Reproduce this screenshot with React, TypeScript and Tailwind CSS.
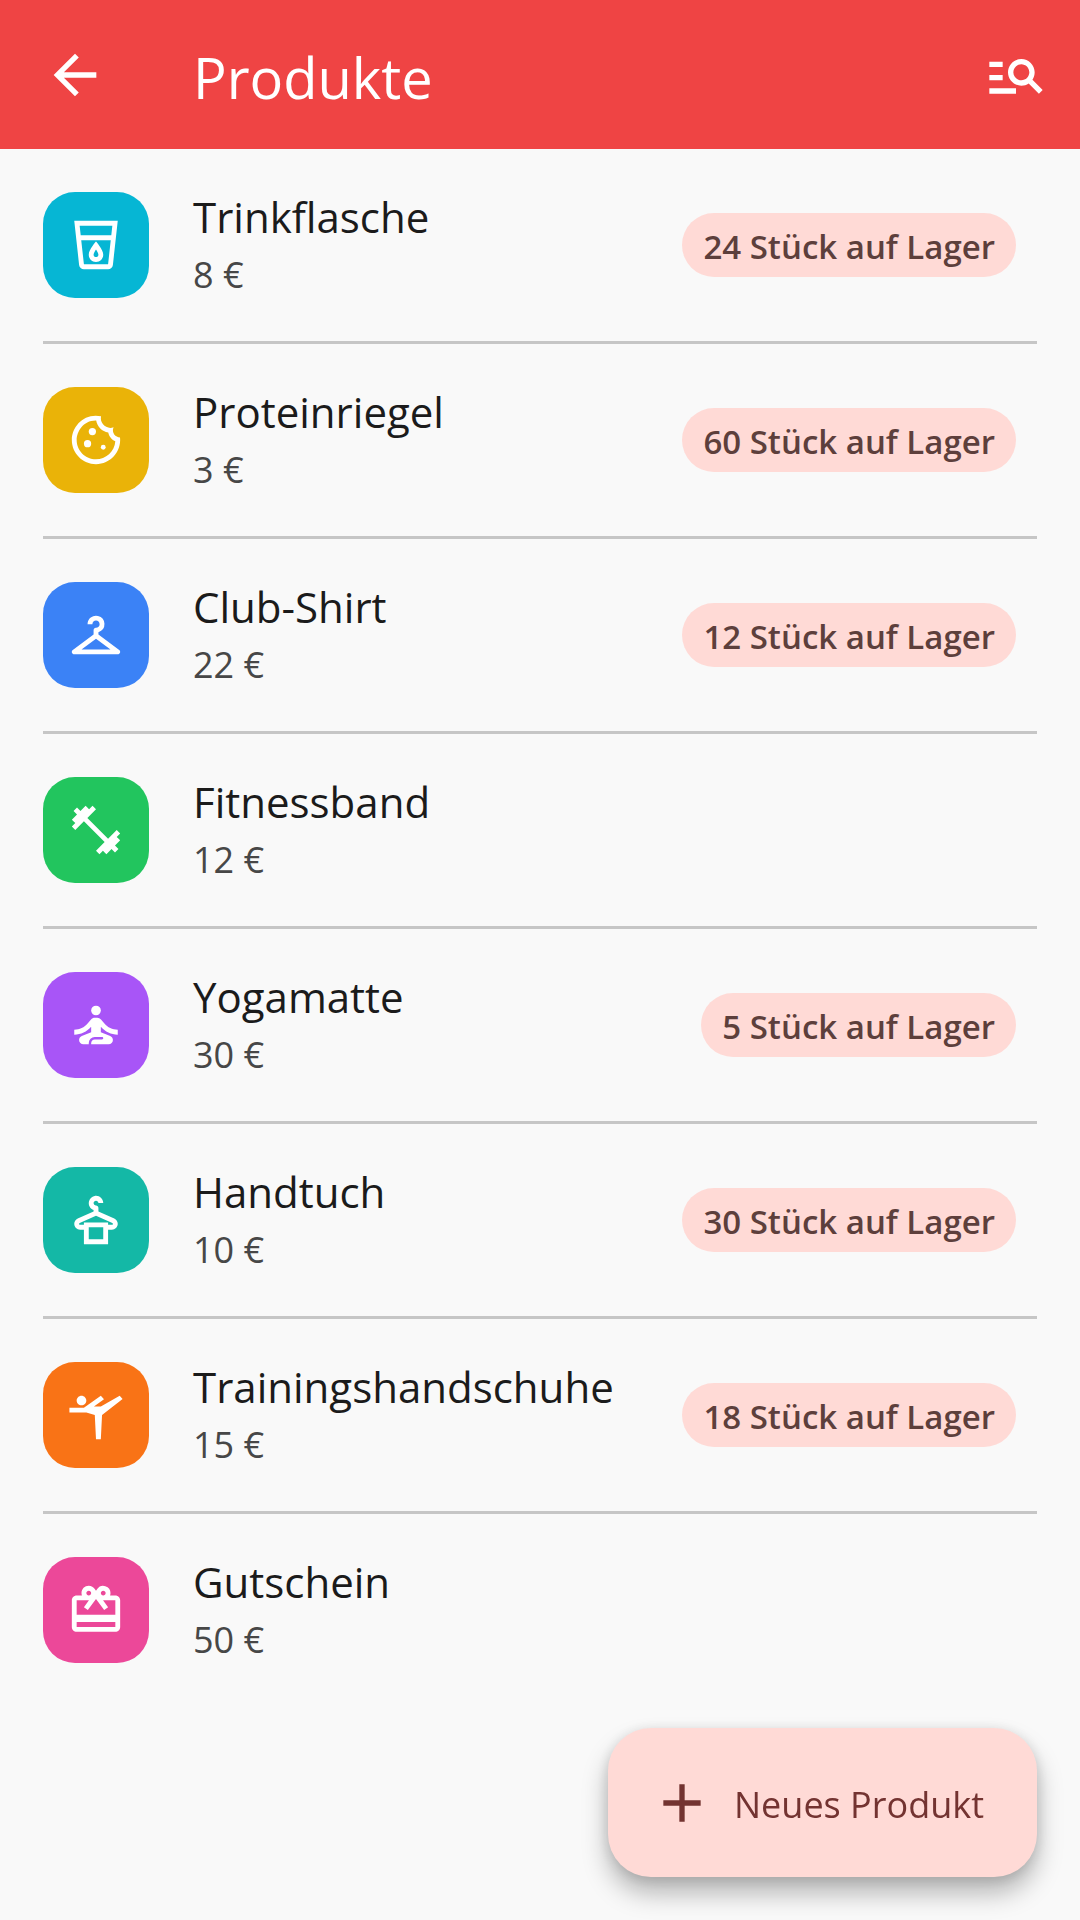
import React from 'react';
import type { IconType } from 'react-icons';
import {
	MdAdd,
	MdArrowBack,
	MdFitnessCenter,
	MdManageSearch,
	MdOutlineCheckroom,
	MdOutlineCookie,
	MdOutlineDryCleaning,
	MdOutlineLocalDrink,
	MdRedeem,
	MdSelfImprovement,
	MdSportsGymnastics,
} from 'react-icons/md';

type Product = {
	name: string;
	price: number;
	stock?: number;
	icon: IconType;
	color: string;
};

const products: Product[] = [
	{ name: 'Trinkflasche', price: 8, stock: 24, icon: MdOutlineLocalDrink, color: 'bg-[#06b6d4]' },
	{ name: 'Proteinriegel', price: 3, stock: 60, icon: MdOutlineCookie, color: 'bg-[#eab308]' },
	{ name: 'Club-Shirt', price: 22, stock: 12, icon: MdOutlineCheckroom, color: 'bg-[#3b82f6]' },
	{ name: 'Fitnessband', price: 12, icon: MdFitnessCenter, color: 'bg-[#22c55e]' },
	{ name: 'Yogamatte', price: 30, stock: 5, icon: MdSelfImprovement, color: 'bg-[#a855f7]' },
	{ name: 'Handtuch', price: 10, stock: 30, icon: MdOutlineDryCleaning, color: 'bg-[#14b8a6]' },
	{ name: 'Trainingshandschuhe', price: 15, stock: 18, icon: MdSportsGymnastics, color: 'bg-[#f97316]' },
	{ name: 'Gutschein', price: 50, icon: MdRedeem, color: 'bg-[#ec4899]' },
];

const TopBar = () => {
	return (
		<header className="flex h-[149px] items-center bg-[#ef4444] pl-[43px] pr-8 text-white">
			<button aria-label="Zurück" className="cursor-pointer">
				<MdArrowBack className="size-16" />
			</button>
			<h1 className="ml-[86px] flex-1 pt-1 text-[56px] leading-[72px]">Produkte</h1>
			<button aria-label="Suchen" className="cursor-pointer">
				<MdManageSearch className="size-16" />
			</button>
		</header>
	);
};

const ProductRow = ({ product }: { product: Product }) => {
	const Icon = product.icon;
	return (
		<li className="mx-[43px] border-b-[3px] border-[#c6c6c6] last:border-b-0">
			<div className="flex h-48 items-center pr-[21px]">
				<div
					className={`flex size-[106px] shrink-0 items-center justify-center rounded-[32px] text-white ${product.color}`}
				>
					<Icon className="size-[58px]" />
				</div>
				<div className="ml-11 min-w-0 flex-1 pt-[2px]">
					<h2 className="text-[42px] leading-[58px] text-[#1b1b1b]">{product.name}</h2>
					<p className="text-[36px] leading-[58px] text-[#474747]">{product.price} €</p>
				</div>
				{product.stock !== undefined && (
					<span className="shrink-0 rounded-full bg-[#ffdad6] px-[21px] pt-1 text-[33px] font-semibold leading-[60px] text-[#5d3f3c]">
						{product.stock} Stück auf Lager
					</span>
				)}
			</div>
		</li>
	);
};

const App = () => {
	return (
		<div className="min-h-screen bg-[#f9f9f9] font-['Open_Sans',sans-serif]">
			<TopBar />
			<main>
				<ul>
					{products.map((product) => (
						<ProductRow key={product.name} product={product} />
					))}
				</ul>
			</main>
			<button className="fixed bottom-[43px] right-[43px] flex h-[149px] cursor-pointer items-center gap-5 rounded-[43px] bg-[#ffdad6] pl-[42px] pr-[53px] text-[#733331] shadow-[0_16px_26px_rgba(0,0,0,0.28),0_2px_14px_rgba(0,0,0,0.12)]">
				<MdAdd className="size-16" />
				<span className="pt-1 text-[36px] leading-[56px]">Neues Produkt</span>
			</button>
		</div>
	);
};

export default App;
